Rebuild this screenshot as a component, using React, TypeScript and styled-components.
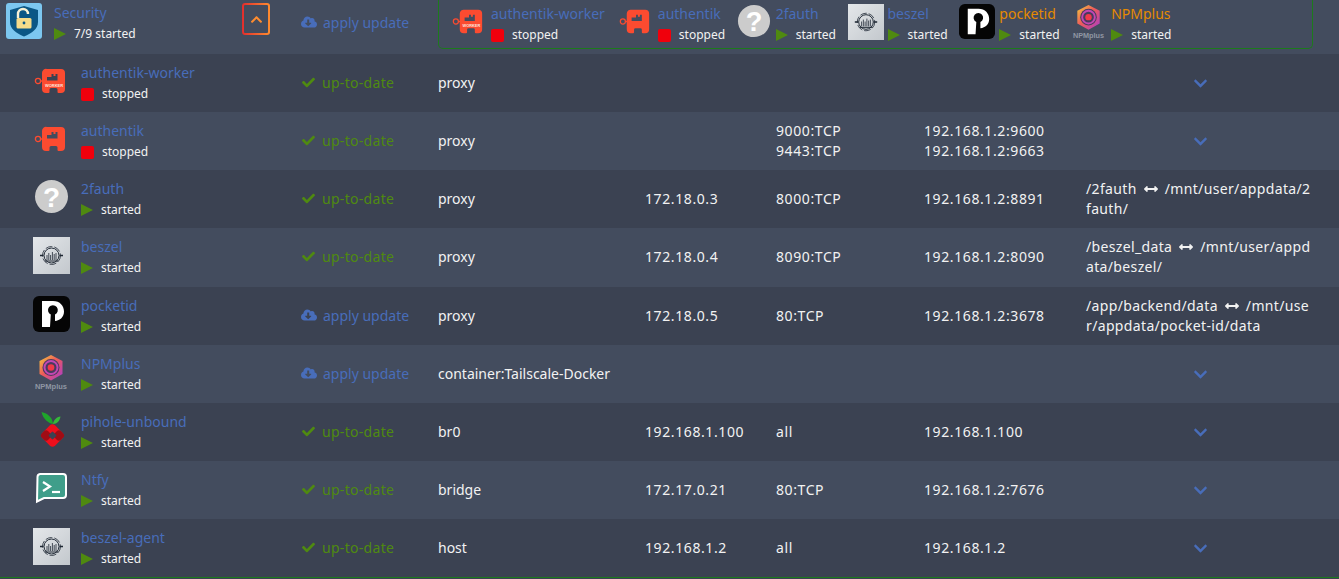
import React from "react";
import styled, { createGlobalStyle } from "styled-components";
import { FaArrowsAltH, FaCheck, FaChevronDown, FaChevronUp, FaCloudDownloadAlt } from "react-icons/fa";

const GlobalStyle = createGlobalStyle`
  html, body {
    margin: 0;
    padding: 0;
    height: 100%;
    overflow: hidden;
    background: #3b4252;
    font-family: "Noto Sans", "Open Sans", sans-serif;
    font-size: 14px;
    color: #f2f2f2;
  }
`;

const columns = "301px 137px 207px 131px 148px 162px 253px";

const Page = styled.div`
  width: 1339px;
  display: flex;
  flex-direction: column;
`;

const HeaderRow = styled.div`
  height: 54px;
  display: grid;
  grid-template-columns: 301px 137px 1fr;
  background: #434c5e;
`;

const HeaderName = styled.div`
  display: flex;
  align-items: flex-start;
  gap: 12px;
  padding: 3px 0 0 6px;
  position: relative;
`;

const HeaderUpdate = styled.div`
  height: 45px;
  display: flex;
`;

const CollapseButton = styled.button`
  position: absolute;
  left: 242px;
  top: 3px;
  width: 28px;
  height: 32px;
  padding: 0;
  box-sizing: border-box;
  display: flex;
  align-items: center;
  justify-content: center;
  color: #ff8c2f;
  font-size: 13px;
  border: 2px solid transparent;
  border-radius: 3px;
  background: linear-gradient(#434c5e, #434c5e) padding-box,
    linear-gradient(90deg, #e22d2d, #ff8c2f) border-box;
`;

const Tiles = styled.div`
  grid-column: 3;
  width: 875px;
  height: 49px;
  box-sizing: border-box;
  padding-left: 12px;
  display: flex;
  align-items: flex-start;
  gap: 11.6px;
  border: 1px solid #1c7a1c;
  border-top: none;
  border-radius: 0 0 5px 5px;
`;

const Tile = styled.div`
  display: flex;
  gap: 4px;
  padding-top: 4px;
  &:first-child {
    margin-right: 1.4px;
  }
  &:nth-child(2) {
    margin-right: -1px;
  }
`;

const Row = styled.div<{ $odd: boolean }>`
  height: 58.15px;
  display: grid;
  grid-template-columns: ${columns};
  align-items: center;
  background: ${(p) => (p.$odd ? "#434c5e" : "#3b4252")};
`;

const NameCell = styled.div`
  display: flex;
  align-items: flex-start;
  gap: 11px;
  padding-left: 33px;
  height: 100%;
  box-sizing: border-box;
  padding-top: 9px;
`;

const IconBox = styled.div<{ $size: number }>`
  width: ${(p) => p.$size}px;
  height: ${(p) => p.$size}px;
  flex: none;
  svg {
    display: block;
    width: 100%;
    height: 100%;
  }
`;

const Info = styled.div`
  display: flex;
  flex-direction: column;
  white-space: nowrap;
`;

const Name = styled.div<{ $pending?: boolean }>`
  color: ${(p) => (p.$pending ? "#e68a00" : "#486dba")};
  line-height: 20px;
`;

const Status = styled.div`
  display: flex;
  align-items: center;
  gap: 8px;
  margin-top: 1px;
  font-size: 12px;
  line-height: 20px;
`;

const PlayMark = styled.span`
  flex: none;
  width: 0;
  height: 0;
  border-style: solid;
  border-width: 6.5px 0 6.5px 12px;
  border-color: transparent transparent transparent #4f8a10;
`;

const StopMark = styled.span`
  flex: none;
  width: 13px;
  height: 13px;
  border-radius: 2px;
  background: #f0000c;
`;

const UpdateCell = styled.div<{ $pending?: boolean }>`
  display: flex;
  align-items: center;
  gap: 6px;
  padding-bottom: 1px;
  letter-spacing: ${(p) => (p.$pending ? "0" : "0.3px")};
  color: ${(p) => (p.$pending ? "#486dba" : "#4f8a10")};
  svg {
    width: ${(p) => (p.$pending ? 16 : 15)}px;
    height: ${(p) => (p.$pending ? 16 : 13)}px;
  }
`;

const Cell = styled.div<{ $numeric?: boolean }>`
  line-height: 20px;
  white-space: nowrap;
  letter-spacing: ${(p) => (p.$numeric ? "0.6px" : "0")};
`;

const VolumeCell = styled.div`
  width: 228px;
  line-height: 20px;
  letter-spacing: 0.35px;
  word-break: break-all;
  svg {
    width: 14px;
    height: 14px;
    margin: 0 7px;
    vertical-align: -2px;
  }
`;

const More = styled.div`
  width: 228px;
  display: flex;
  justify-content: center;
  color: #486dba;
  font-size: 15px;
  padding-top: 1px;
`;

const BottomLine = styled.div`
  height: 1px;
  background: #1c7a1c;
`;

const AuthentikIcon = ({ worker }: { worker?: boolean }) => (
  <svg viewBox="0 1 37 37">
    <circle cx="5" cy="19" r="2.6" fill="none" stroke="#fc4b30" strokeWidth="1.3" />
    <path d="M7.500 18.300h4v1.400h-4z" fill="#fc4b30" />
    <path
      fillRule="evenodd"
      d="M14 7h14a4 4 0 0 1 4 4v16a4 4 0 0 1-4 4h-2.500a1 1 0 0 1-1-1v-2.500a1.500 1.500 0 0 0-1.500-1.500h-5a1.500 1.500 0 0 0-1.500 1.500V30a1 1 0 0 1-1 1H13a4 4 0 0 1-4-4V11a4 4 0 0 1 5-4zM14 18.500h10.500V12h-2v2h-2v-2h-2v3H14z"
      fill="#fc4b30"
    />
    {worker && (
      <text x="21" y="24.800" textAnchor="middle" fontFamily="Liberation Sans" fontSize="4" fontWeight="700" fill="#ffe3de">
        WORKER
      </text>
    )}
  </svg>
);

const QuestionIcon = () => (
  <svg viewBox="0 1 37 37">
    <circle cx="18.500" cy="18.500" r="16.500" fill="#cccccc" />
    <text x="18.500" y="28.500" textAnchor="middle" fontFamily="Liberation Sans" fontSize="28" fontWeight="700" fill="#ffffff">
      ?
    </text>
  </svg>
);

const BeszelIcon = () => (
  <svg viewBox="0 0 37 37">
    <defs>
      <linearGradient id="beszelBg" x1="0" y1="0" x2="1" y2="1">
        <stop offset="0" stopColor="#e4e7ea" />
        <stop offset="1" stopColor="#c3c8cd" />
      </linearGradient>
    </defs>
    <rect width="37" height="37" fill="url(#beszelBg)" />
    <g fill="none" stroke="#1e2733" strokeWidth="1">
      <circle cx="18.500" cy="18.500" r="7.500" />
      <circle cx="18.500" cy="18.500" r="9" strokeDasharray="7 2" strokeWidth="0.8" />
      <path d="M7 18.500h3.500M26.500 18.500H30" strokeWidth="1.400" />
      <path d="M14 23v-5M15.800 23v-7M17.600 23v-5M19.400 23v-8M21.200 23v-6M23 23v-7" strokeWidth="0.8" />
      <path d="M12 24h13" />
    </g>
  </svg>
);

const PocketIdIcon = () => (
  <svg viewBox="0 0 37 37">
    <rect width="37" height="36" rx="6" fill="#050505" />
    <path d="M9 5H20C27 5 31 10 31 15.500C31 21 27 24.500 22 25V18.500A4.900 4.900 0 1 0 17.800 18.500L17 31H9Z" fill="#ffffff" />
  </svg>
);

const NpmPlusIcon = () => (
  <svg viewBox="0 1 37 37">
    <defs>
      <linearGradient id="npmHex" x1="0" y1="0" x2="1" y2="1">
        <stop offset="0" stopColor="#f4d03a" />
        <stop offset="0.45" stopColor="#ef5a5a" />
        <stop offset="1" stopColor="#a63ad0" />
      </linearGradient>
    </defs>
    <path d="M18 2 29.500 8v13L18 27.500 6.500 21V8z" fill="url(#npmHex)" />
    <circle cx="18" cy="14.500" r="8.500" fill="#4a3a5e" />
    <circle cx="18" cy="14.500" r="6.500" fill="none" stroke="#c247b4" strokeWidth="2" />
    <circle cx="18" cy="14.500" r="3.300" fill="#f03a4a" />
    <text x="18" y="35.500" textAnchor="middle" fontFamily="Liberation Sans" fontSize="7.500" fontWeight="700" fill="#8f96a3">
      NPMplus
    </text>
  </svg>
);

const PiholeIcon = () => (
  <svg viewBox="0 1 37 37">
    <path d="M20 13C15 12 10 8 8.500 1 15 2.500 19.500 6.500 20 13z" fill="#1fa52b" />
    <path d="M20 13c.500-4 3.500-7 7.500-7.500-.500 4-3.500 7.500-7.500 7.500z" fill="#36b83a" />
    <g transform="rotate(45 19.500 24.500)">
      <rect x="10.500" y="15.500" width="18" height="18" rx="4" fill="#ee0f1c" />
      <rect x="19.500" y="15.500" width="9" height="9" rx="3" fill="#a00c14" />
      <rect x="10.500" y="24.500" width="9" height="9" rx="3" fill="#a00c14" />
      <rect x="16.500" y="21.500" width="6" height="6" rx="1" fill="#3b4252" />
    </g>
  </svg>
);

const NtfyIcon = () => (
  <svg viewBox="0 1 37 37">
    <path
      d="M7 5h23a3 3 0 0 1 3 3v18a3 3 0 0 1-3 3H11l-7 3.500L4.500 8A3 3 0 0 1 7 5z"
      fill="#3f9e8a"
      stroke="#ffffff"
      strokeWidth="2"
    />
    <path d="M10 13l7 4.500-7 4.500" fill="none" stroke="#ffffff" strokeWidth="2.200" />
    <path d="M19 23h8" stroke="#ffffff" strokeWidth="2.200" />
  </svg>
);

const SecurityIcon = () => (
  <svg viewBox="0 0 36 36">
    <rect width="36" height="36" rx="3" fill="#7cc7f0" />
    <path d="M18 3 32 7v12c0 7-6 11-14 14.500C10 30 4 26 4 19V7z" fill="#0b5785" />
    <path d="M12 15V11a5 5 0 0 1 10 0" fill="none" stroke="#f7f2d6" strokeWidth="2.400" />
    <rect x="10.500" y="15" width="15" height="10.500" rx="1.500" fill="#f6dc8a" />
    <circle cx="18" cy="20" r="1.400" fill="#0b5785" />
  </svg>
);

type Container = {
  name: string;
  icon: React.ReactNode;
  stopped?: boolean;
  pending?: boolean;
  network: string;
  ip?: string;
  ports?: string[];
  mapped?: string[];
  volume?: [string, string];
};

const containers: Container[] = [
  { name: "authentik-worker", icon: <AuthentikIcon worker />, stopped: true, network: "proxy" },
  {
    name: "authentik",
    icon: <AuthentikIcon />,
    stopped: true,
    network: "proxy",
    ports: ["9000:TCP", "9443:TCP"],
    mapped: ["192.168.1.2:9600", "192.168.1.2:9663"],
  },
  {
    name: "2fauth",
    icon: <QuestionIcon />,
    network: "proxy",
    ip: "172.18.0.3",
    ports: ["8000:TCP"],
    mapped: ["192.168.1.2:8891"],
    volume: ["/2fauth", "/mnt/user/appdata/2fauth/"],
  },
  {
    name: "beszel",
    icon: <BeszelIcon />,
    network: "proxy",
    ip: "172.18.0.4",
    ports: ["8090:TCP"],
    mapped: ["192.168.1.2:8090"],
    volume: ["/beszel_data", "/mnt/user/appdata/beszel/"],
  },
  {
    name: "pocketid",
    icon: <PocketIdIcon />,
    pending: true,
    network: "proxy",
    ip: "172.18.0.5",
    ports: ["80:TCP"],
    mapped: ["192.168.1.2:3678"],
    volume: ["/app/backend/data", "/mnt/user/appdata/pocket-id/data"],
  },
  { name: "NPMplus", icon: <NpmPlusIcon />, pending: true, network: "container:Tailscale-Docker" },
  {
    name: "pihole-unbound",
    icon: <PiholeIcon />,
    network: "br0",
    ip: "192.168.1.100",
    ports: ["all"],
    mapped: ["192.168.1.100"],
  },
  {
    name: "Ntfy",
    icon: <NtfyIcon />,
    network: "bridge",
    ip: "172.17.0.21",
    ports: ["80:TCP"],
    mapped: ["192.168.1.2:7676"],
  },
  {
    name: "beszel-agent",
    icon: <BeszelIcon />,
    network: "host",
    ip: "192.168.1.2",
    ports: ["all"],
    mapped: ["192.168.1.2"],
  },
];

const StatusLine = ({ stopped, label }: { stopped?: boolean; label?: string }) => (
  <Status>
    {stopped ? <StopMark /> : <PlayMark />}
    {label ?? (stopped ? "stopped" : "started")}
  </Status>
);

const UpdateState = ({ pending }: { pending?: boolean }) =>
  pending ? (
    <UpdateCell $pending>
      <FaCloudDownloadAlt />
      apply update
    </UpdateCell>
  ) : (
    <UpdateCell>
      <FaCheck />
      up-to-date
    </UpdateCell>
  );

export default function App() {
  return (
    <>
      <GlobalStyle />
      <Page>
        <HeaderRow>
          <HeaderName>
            <IconBox $size={36}>
              <SecurityIcon />
            </IconBox>
            <Info>
              <Name>Security</Name>
              <StatusLine label="7/9 started" />
            </Info>
            <CollapseButton>
              <FaChevronUp />
            </CollapseButton>
          </HeaderName>
          <HeaderUpdate>
            <UpdateState pending />
          </HeaderUpdate>
          <Tiles>
            {containers.slice(0, 6).map((c) => (
              <Tile key={c.name}>
                <IconBox $size={36}>{c.icon}</IconBox>
                <Info>
                  <Name $pending={c.name === "pocketid" || c.name === "NPMplus"}>{c.name}</Name>
                  <StatusLine stopped={c.stopped} />
                </Info>
              </Tile>
            ))}
          </Tiles>
        </HeaderRow>
        {containers.map((c, i) => (
          <Row key={c.name} $odd={i % 2 === 1}>
            <NameCell>
              <IconBox $size={37}>{c.icon}</IconBox>
              <Info>
                <Name>{c.name}</Name>
                <StatusLine stopped={c.stopped} />
              </Info>
            </NameCell>
            <UpdateState pending={c.pending} />
            <Cell>{c.network}</Cell>
            <Cell $numeric>{c.ip}</Cell>
            <Cell $numeric>
              {c.ports?.map((p) => (
                <div key={p}>{p}</div>
              ))}
            </Cell>
            <Cell $numeric>
              {c.mapped?.map((m) => (
                <div key={m}>{m}</div>
              ))}
            </Cell>
            {c.volume ? (
              <VolumeCell>
                {c.volume[0]}
                <FaArrowsAltH />
                {c.volume[1]}
              </VolumeCell>
            ) : (
              <More>
                <FaChevronDown />
              </More>
            )}
          </Row>
        ))}
        <BottomLine />
      </Page>
    </>
  );
}
